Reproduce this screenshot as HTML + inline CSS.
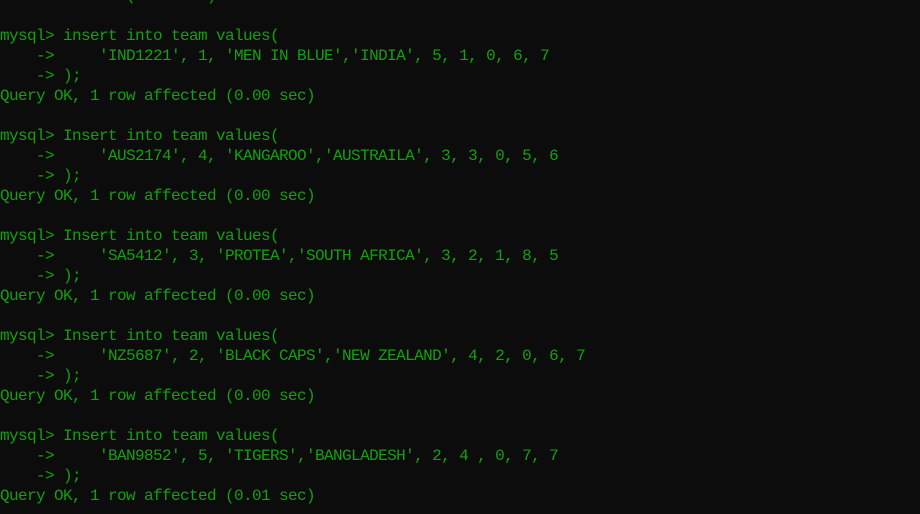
<!DOCTYPE html>
<html><head><style>
html,body{margin:0;padding:0;background:#0c0c0c;width:920px;height:514px;overflow:hidden}
pre{margin:0;position:absolute;top:-14px;left:0;font-family:"Liberation Mono",monospace;font-size:16px;letter-spacing:-0.6px;line-height:20px;color:#13a10e;white-space:pre}
</style></head><body>
<pre>              (        )

mysql&gt; insert into team values(
    -&gt;     'IND1221', 1, 'MEN IN BLUE','INDIA', 5, 1, 0, 6, 7
    -&gt; );
Query OK, 1 row affected (0.00 sec)

mysql&gt; Insert into team values(
    -&gt;     'AUS2174', 4, 'KANGAROO','AUSTRAILA', 3, 3, 0, 5, 6
    -&gt; );
Query OK, 1 row affected (0.00 sec)

mysql&gt; Insert into team values(
    -&gt;     'SA5412', 3, 'PROTEA','SOUTH AFRICA', 3, 2, 1, 8, 5
    -&gt; );
Query OK, 1 row affected (0.00 sec)

mysql&gt; Insert into team values(
    -&gt;     'NZ5687', 2, 'BLACK CAPS','NEW ZEALAND', 4, 2, 0, 6, 7
    -&gt; );
Query OK, 1 row affected (0.00 sec)

mysql&gt; Insert into team values(
    -&gt;     'BAN9852', 5, 'TIGERS','BANGLADESH', 2, 4 , 0, 7, 7
    -&gt; );
Query OK, 1 row affected (0.01 sec)
</pre>
</body></html>
